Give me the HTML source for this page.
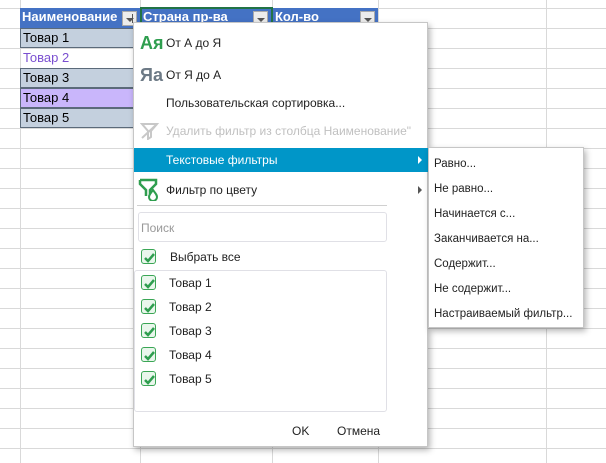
<!DOCTYPE html>
<html><head><meta charset="utf-8"><style>
*{margin:0;padding:0;box-sizing:border-box}
body{width:606px;height:463px;overflow:hidden;background:#fff;font-family:"Segoe UI","Liberation Sans","DejaVu Sans",sans-serif;position:relative}
.a{position:absolute}
.t{position:absolute;font-size:12px;color:#222;white-space:nowrap;line-height:16px}
.cb{position:absolute;width:15px;height:15px;border:1px solid #3aa655;border-radius:3px;background:#e9f6ec}
.cb svg{position:absolute;left:1px;top:1px}
.dd{position:absolute;top:11px;width:15px;height:15px;background:#ececec;border:1px solid #aaa}
.dd::after{content:"";position:absolute;left:3px;top:6px;border-top:4px solid #555;border-left:4px solid transparent;border-right:4px solid transparent}
</style></head><body>
<svg class="a" style="left:0;top:0" width="606" height="463">
<g stroke="#d9d9d9" stroke-width="1">
<line x1="0" y1="8.5" x2="606" y2="8.5"/><line x1="0" y1="28.5" x2="606" y2="28.5"/><line x1="0" y1="48.5" x2="606" y2="48.5"/><line x1="0" y1="68.5" x2="606" y2="68.5"/><line x1="0" y1="88.5" x2="606" y2="88.5"/><line x1="0" y1="108.5" x2="606" y2="108.5"/><line x1="0" y1="128.5" x2="606" y2="128.5"/><line x1="0" y1="148.5" x2="606" y2="148.5"/><line x1="0" y1="168.5" x2="606" y2="168.5"/><line x1="0" y1="188.5" x2="606" y2="188.5"/><line x1="0" y1="208.5" x2="606" y2="208.5"/><line x1="0" y1="228.5" x2="606" y2="228.5"/><line x1="0" y1="248.5" x2="606" y2="248.5"/><line x1="0" y1="268.5" x2="606" y2="268.5"/><line x1="0" y1="288.5" x2="606" y2="288.5"/><line x1="0" y1="308.5" x2="606" y2="308.5"/><line x1="0" y1="328.5" x2="606" y2="328.5"/><line x1="0" y1="348.5" x2="606" y2="348.5"/><line x1="0" y1="368.5" x2="606" y2="368.5"/><line x1="0" y1="388.5" x2="606" y2="388.5"/><line x1="0" y1="408.5" x2="606" y2="408.5"/><line x1="0" y1="428.5" x2="606" y2="428.5"/><line x1="0" y1="448.5" x2="606" y2="448.5"/>
<line x1="20.5" y1="0" x2="20.5" y2="463"/><line x1="140.5" y1="0" x2="140.5" y2="463"/><line x1="272.5" y1="0" x2="272.5" y2="463"/><line x1="378.5" y1="0" x2="378.5" y2="463"/><line x1="546.5" y1="0" x2="546.5" y2="463"/>
</g></svg>
<div class="a" style="left:20px;top:8px;width:358px;height:20px;background:#4472c4"></div>
<div class="a" style="left:140px;top:7px;width:133px;height:22px;border:2px solid #217346"></div>
<div class="t" style="left:22px;top:9px;color:#fff;font-weight:bold;font-size:13px">Наименование</div>
<div class="t" style="left:143px;top:9px;color:#fff;font-weight:bold;font-size:13px">Страна пр-ва</div>
<div class="t" style="left:275px;top:9px;color:#fff;font-weight:bold;font-size:13px">Кол-во</div>
<div class="dd" style="left:122px"></div>
<div class="a" style="left:132px;top:14px;width:1px;height:9px;background:#555"></div>
<div class="dd" style="left:253px"></div>
<div class="dd" style="left:360px"></div>
<div class="a" style="left:20px;top:28px;width:120px;height:20px;background:#c4d0de;border:1px solid #5b6a7a"></div>
<div class="a" style="left:20px;top:68px;width:120px;height:20px;background:#c4d0de;border:1px solid #5b6a7a"></div>
<div class="a" style="left:20px;top:88px;width:120px;height:20px;background:#c9b6fb;border:1px solid #5b6a7a"></div>
<div class="a" style="left:20px;top:108px;width:120px;height:20px;background:#c4d0de;border:1px solid #5b6a7a"></div>
<div class="t" style="left:23px;top:30px;font-size:13px;color:#000">Товар 1</div>
<div class="t" style="left:23px;top:50px;font-size:13px;color:#7a4fd0">Товар 2</div>
<div class="t" style="left:23px;top:70px;font-size:13px;color:#000">Товар 3</div>
<div class="t" style="left:23px;top:90px;font-size:13px;color:#000">Товар 4</div>
<div class="t" style="left:23px;top:110px;font-size:13px;color:#000">Товар 5</div>
<div class="a" style="left:133px;top:22px;width:295px;height:425px;background:#fff;border:1px solid #c6c6c6;box-shadow:2px 3px 6px rgba(0,0,0,.3)"></div>
<div class="t" style="left:140px;top:33px;color:#2f9e4f;font-weight:bold;font-size:18px;line-height:20px">Ая</div>
<div class="t" style="left:166px;top:35px">От А до Я</div>
<div class="t" style="left:140px;top:65px;color:#6d7a86;font-weight:bold;font-size:18px;line-height:20px">Яа</div>
<div class="t" style="left:166px;top:67px">От Я до А</div>
<div class="t" style="left:166px;top:95px">Пользовательская сортировка...</div>
<svg class="a" style="left:140px;top:122px" width="20" height="18"><path d="M2 2h15l-6 7v6l-3 2V9z" fill="none" stroke="#c8c8c8" stroke-width="2"/><line x1="2" y1="16" x2="17" y2="2" stroke="#c8c8c8" stroke-width="2"/></svg>
<div class="t" style="left:166px;top:123px;color:#c0c0c0">Удалить фильтр из столбца Наименование"</div>
<div class="a" style="left:134px;top:148px;width:294px;height:24px;background:#0096c8"></div>
<div class="t" style="left:166px;top:152px;color:#fff">Текстовые фильтры</div>
<div class="a" style="left:418px;top:156px;width:0;height:0;border-left:4px solid #fff;border-top:4px solid transparent;border-bottom:4px solid transparent"></div>
<svg class="a" style="left:138px;top:177px" width="22" height="24"><path d="M2 3h16v4l-6 6v4" fill="none" stroke="#2f9e4f" stroke-width="2.5"/><path d="M2 3v4l6 6v6" fill="none" stroke="#2f9e4f" stroke-width="2.5"/><path d="M15 13c-3 4-4 5-4 7a4 4 0 0 0 8 0c0-2-1-3-4-7z" fill="none" stroke="#2f9e4f" stroke-width="2"/></svg>
<div class="t" style="left:166px;top:182px">Фильтр по цвету</div>
<div class="a" style="left:418px;top:186px;width:0;height:0;border-left:4px solid #555;border-top:4px solid transparent;border-bottom:4px solid transparent"></div>
<div class="a" style="left:137px;top:205px;width:250px;height:1px;background:#d0d0d0"></div>
<div class="a" style="left:138px;top:212px;width:249px;height:30px;border:1px solid #e0e0e6;border-radius:3px"></div>
<div class="t" style="left:141px;top:220px;color:#999">Поиск</div>
<div class="cb" style="left:141px;top:249px"><svg width="13" height="13"><path d="M2 7l3 3 6-7" fill="none" stroke="#2f9e4f" stroke-width="2.5"/></svg></div>
<div class="t" style="left:170px;top:249px">Выбрать все</div>
<div class="a" style="left:134px;top:270px;width:253px;height:142px;border:1px solid #e0e0e6;border-radius:3px"></div>
<div class="cb" style="left:141px;top:275px"><svg width="13" height="13"><path d="M2 7l3 3 6-7" fill="none" stroke="#2f9e4f" stroke-width="2.5"/></svg></div>
<div class="t" style="left:169px;top:275px">Товар 1</div>
<div class="cb" style="left:141px;top:299px"><svg width="13" height="13"><path d="M2 7l3 3 6-7" fill="none" stroke="#2f9e4f" stroke-width="2.5"/></svg></div>
<div class="t" style="left:169px;top:299px">Товар 2</div>
<div class="cb" style="left:141px;top:323px"><svg width="13" height="13"><path d="M2 7l3 3 6-7" fill="none" stroke="#2f9e4f" stroke-width="2.5"/></svg></div>
<div class="t" style="left:169px;top:323px">Товар 3</div>
<div class="cb" style="left:141px;top:347px"><svg width="13" height="13"><path d="M2 7l3 3 6-7" fill="none" stroke="#2f9e4f" stroke-width="2.5"/></svg></div>
<div class="t" style="left:169px;top:347px">Товар 4</div>
<div class="cb" style="left:141px;top:371px"><svg width="13" height="13"><path d="M2 7l3 3 6-7" fill="none" stroke="#2f9e4f" stroke-width="2.5"/></svg></div>
<div class="t" style="left:169px;top:371px">Товар 5</div>
<div class="t" style="left:292px;top:423px">OK</div>
<div class="t" style="left:337px;top:423px">Отмена</div>
<div class="a" style="left:428px;top:147px;width:156px;height:181px;background:#fff;border:1px solid #c6c6c6;box-shadow:2px 3px 6px rgba(0,0,0,.3)"></div>
<div class="t" style="left:434px;top:156px;font-size:11.5px">Равно...</div>
<div class="t" style="left:434px;top:181px;font-size:11.5px">Не равно...</div>
<div class="t" style="left:434px;top:206px;font-size:11.5px">Начинается с...</div>
<div class="t" style="left:434px;top:231px;font-size:11.5px">Заканчивается на...</div>
<div class="t" style="left:434px;top:256px;font-size:11.5px">Содержит...</div>
<div class="t" style="left:434px;top:281px;font-size:11.5px">Не содержит...</div>
<div class="t" style="left:434px;top:306px;font-size:11.5px">Настраиваемый фильтр...</div>
</body></html>
